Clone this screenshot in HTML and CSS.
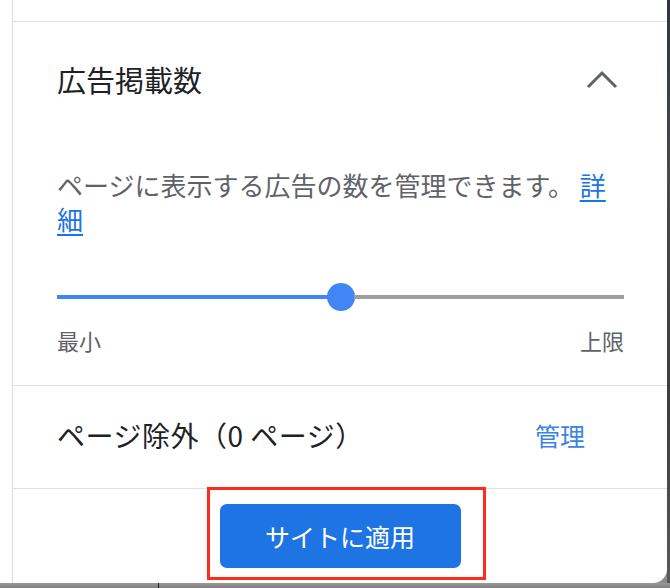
FILE: index.html
```html
<!DOCTYPE html>
<html lang="ja">
<head>
<meta charset="utf-8">
<title>広告掲載数</title>
<link rel="stylesheet" href="styles.css">
</head>
<body>
<div class="screen">
  <div class="main">
    <div class="gutter"></div>
    <div class="panel">
      <div class="section-top"></div>
      <div class="section-ads">
        <div class="ads-head">
          <h2 class="ads-title">広告掲載数</h2>
          <svg class="chevron" width="32" height="20" viewBox="0 0 32 20" aria-hidden="true">
            <path d="M2 17 L16 3 L30 17" fill="none" stroke="#5f6368" stroke-width="3"/>
          </svg>
        </div>
        <p class="ads-desc">ページに表示する広告の数を管理できます。 <a class="link" href="#">詳細</a></p>
        <div class="slider">
          <div class="track-on"></div>
          <div class="thumb"></div>
          <div class="track-off"></div>
        </div>
        <div class="slider-labels">
          <span>最小</span>
          <span>上限</span>
        </div>
      </div>
      <div class="section-exclude">
        <span class="exclude-text">ページ除外（0 ページ）</span>
        <a class="manage" href="#">管理</a>
      </div>
      <div class="section-footer">
        <div class="btn-wrap">
          <button class="apply-btn" type="button">サイトに適用</button>
          <span class="highlight"></span>
        </div>
      </div>
    </div>
  </div>
  <div class="edge"></div>
  <div class="dock"><div class="dock-line"></div></div>
</div>
</body>
</html>
```

FILE: styles.css
```css
* { box-sizing: border-box; }
html, body { margin: 0; padding: 0; }
body {
  width: 670px;
  height: 588px;
  overflow: hidden;
  font-family: "Noto Sans CJK JP", "Noto Sans", sans-serif;
  background: #ffffff;
}
.screen {
  display: grid;
  grid-template-columns: 667px 3px;
  grid-template-rows: 583px 5px;
  width: 670px;
  height: 588px;
  background: #8b8b8b;
}
.main {
  grid-column: 1;
  grid-row: 1;
  display: flex;
  background: #8b8b8b;
}
.gutter {
  width: 12px;
  background: #ffffff;
}
.panel {
  flex: 1;
  display: flex;
  flex-direction: column;
  background: #ffffff;
  border-left: 1px solid #dadce0;
  border-bottom-right-radius: 14px;
  overflow: hidden;
}
.section-top {
  height: 22px;
  border-bottom: 1px solid #e0e0e0;
}
.section-ads {
  padding: 29px 43px 31px 44px;
  border-bottom: 1px solid #e0e0e0;
}
.ads-head {
  display: flex;
  align-items: center;
  justify-content: space-between;
  height: 56px;
}
.ads-title {
  margin: 0;
  font-size: 29px;
  font-weight: 400;
  color: #202124;
  line-height: 56px;
}
.chevron {
  margin-right: 6px;
  margin-top: 2px;
}
.ads-desc {
  margin: 61px 0 0 0;
  font-size: 26px;
  line-height: 34px;
  color: #5f6368;
}
.link {
  color: #1a73e8;
  text-decoration: underline;
  text-underline-offset: 4px;
}
.slider {
  display: flex;
  align-items: center;
  height: 28px;
  margin-top: 47px;
}
.track-on {
  width: 271px;
  height: 4px;
  background: #4285f4;
}
.thumb {
  width: 28px;
  height: 28px;
  border-radius: 50%;
  background: #4285f4;
  margin: 0 -1px;
}
.track-off {
  flex: 1;
  height: 4px;
  background: #9e9e9e;
}
.slider-labels {
  display: flex;
  justify-content: space-between;
  margin-top: 15px;
  font-size: 22px;
  line-height: 28px;
  color: #5f6368;
}
.section-exclude {
  display: flex;
  align-items: center;
  justify-content: space-between;
  height: 103px;
  padding: 0 82px 4px 44px;
  border-bottom: 1px solid #e0e0e0;
}
.exclude-text {
  font-size: 28px;
  letter-spacing: 0.5px;
  color: #202124;
}
.manage {
  font-size: 25px;
  color: #3c83e6;
  text-decoration: none;
}
.section-footer {
  flex: 1;
  display: flex;
  justify-content: center;
  padding-top: 15px;
}
.btn-wrap {
  position: relative;
  height: 64px;
}
.apply-btn {
  width: 241px;
  height: 64px;
  border: none;
  border-radius: 7px;
  background: #1f74e3;
  color: #ffffff;
  font-family: "Noto Sans CJK JP", "Noto Sans", sans-serif;
  font-size: 25px;
  padding: 0;
}
.highlight {
  position: absolute;
  left: -13px;
  right: -25px;
  top: -17px;
  bottom: -12px;
  border: 3px solid #ff2b1c;
  pointer-events: none;
}
.edge {
  grid-column: 2;
  grid-row: 1;
  background: linear-gradient(#2e3440, #4a4a4a 30%, #3d3d3d 70%, #5a5a5a);
}
.dock {
  grid-column: 1 / span 2;
  grid-row: 2;
  padding-left: 158px;
  background: linear-gradient(#9a9a9a, #7e7e7e);
}
.dock-line {
  width: 1px;
  height: 5px;
  background: #1e1e1e;
}
```
